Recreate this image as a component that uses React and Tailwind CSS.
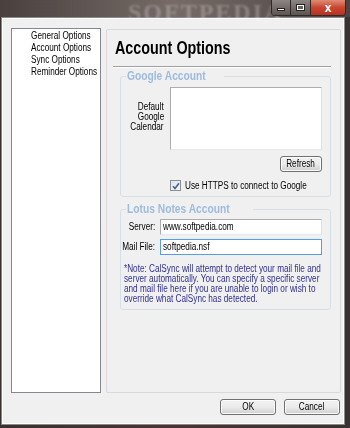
import React from 'react';

const font = { fontFamily: '"Liberation Sans", Arial, sans-serif' };

// the shot is squeezed sideways, so text is narrowed to match its widths
const Narrow = ({ children, right, center, className = '' }) => (
  <span
    className={`inline-block whitespace-nowrap scale-x-[0.82] ${
      right ? 'origin-right' : center ? 'origin-center' : 'origin-left'
    } ${className}`}
  >
    {children}
  </span>
);

const WinButton = ({ children, className = 'w-[56px]' }) => (
  <button
    className={`flex h-[16px] items-center justify-center rounded-[3px] border border-[#707070] bg-gradient-to-b from-[#f2f2f2] via-[#ebebeb] to-[#cfcfcf] text-[10px] leading-[14px] text-black shadow-[inset_0_0_0_1px_#fcfcfc] ${className}`}
  >
    <Narrow center>{children}</Narrow>
  </button>
);

const TextBox = ({ value, focused, className = '' }) => (
  <div
    className={`h-[16px] w-[162px] border bg-white pl-[2px] text-[10px] leading-[14px] text-black ${
      focused ? 'border-[#569de5]' : 'border-[#abadb3] border-b-[#e3e9ef] border-r-[#dbdfe6]'
    } ${className}`}
  >
    <Narrow>{value}</Narrow>
  </div>
);

const Group = ({ title, children, className = '' }) => (
  <fieldset className={`ml-[13px] w-[211px] min-w-0 rounded-[3px] border border-[#d5dfe5] ${className}`}>
    <legend className="ml-[5px] px-[1px] text-[12.5px] font-bold leading-[13px] text-[#9ebbde]">
      <Narrow>{title}</Narrow>
    </legend>
    {children}
  </fieldset>
);

export default function App() {
  const options = ['General Options', 'Account Options', 'Sync Options', 'Reminder Options'];

  return (
    <div
      style={font}
      className="flex h-[428px] w-[350px] flex-col overflow-hidden bg-gradient-to-r from-[#3a3230] via-[#4a3532] to-[#3a3230]"
    >
      {/* glass title bar */}
      <div className="relative flex h-[17px] shrink-0 items-start justify-end bg-gradient-to-r from-[#4a413e] via-[#766b67] to-[#4d4441] pr-[4px]">
        <div
          className="absolute left-[128px] top-[-6px] select-none text-[24px] font-bold tracking-[2px] text-white/25 blur-[1px]"
          style={{ fontFamily: '"Liberation Serif", serif' }}
        >
          SOFTPEDIA
        </div>
        <div className="relative flex h-[16px] overflow-hidden rounded-b-[4px] border border-t-0 border-[#2f2a29]">
          <div className="flex w-[19px] items-center justify-center border-r border-[#2f2a29] bg-gradient-to-b from-[#8d8581] to-[#5d5552]">
            <div className="mt-[4px] h-[3px] w-[8px] border border-[#222] bg-white" />
          </div>
          <div className="flex w-[20px] items-center justify-center border-r border-[#2f2a29] bg-gradient-to-b from-[#8d8581] to-[#5d5552]">
            <div className="h-[7px] w-[9px] border border-[#222] bg-white p-[1px]">
              <div className="h-full w-full bg-[#6a625f]" />
            </div>
          </div>
          <div className="flex w-[34px] items-center justify-center bg-gradient-to-b from-[#e08a74] via-[#c8462f] to-[#b8321f] text-[12px] font-bold leading-none text-white">
            x
          </div>
        </div>
      </div>

      {/* window body */}
      <div className="ml-[1px] h-[408px] w-[344px] border border-[#8a8a8a] bg-[#f0f0f0] shadow-[inset_0_0_0_1px_#ffffff]">
        <div className="flex pl-[9px] pr-[3px] pt-[10px]">
          <div className="h-[365px] w-[90px] overflow-hidden border border-[#828790] bg-white pl-[19px] pt-[1px]">
            {options.map(o => (
              <div key={o} className="text-[10px] leading-[12px] text-black">
                <Narrow>{o}</Narrow>
              </div>
            ))}
          </div>

          <div className="ml-[5px] mt-[1px] h-[364px] w-[235px] overflow-hidden rounded-[2px] border border-[#d9d9d9]">
            <h1 className="pl-[8px] pt-[8px] text-[17.5px] font-bold leading-[20px] text-black">
              <Narrow>Account Options</Narrow>
            </h1>
            <div className="ml-[6px] mt-[8px] h-[2px] w-[218px] border-b border-t border-b-white border-t-[#a0a0a0]" />

            <Group title="Google Account" className="mt-[2px] pb-[5px]">
              <div className="mt-[4px] flex">
                <div className="w-[43px] pt-[15px] text-right text-[10px] leading-[10px] text-black">
                  <Narrow right>Default</Narrow>
                  <br />
                  <Narrow right>Google</Narrow>
                  <br />
                  <Narrow right>Calendar</Narrow>
                </div>
                <div className="ml-[6px] h-[63px] w-[152px] border border-[#abadb3] border-b-[#e3e9ef] border-r-[#dbdfe6] bg-white" />
              </div>
              <div className="mt-[6px] flex justify-end pr-[8px]">
                <WinButton className="w-[42px]">Refresh</WinButton>
              </div>
              <div className="ml-[49px] mt-[8px] flex items-center">
                <div className="flex h-[11px] w-[11px] shrink-0 items-center justify-center border border-[#8e8f8f] bg-gradient-to-br from-[#dfe3ea] to-[#f4f6f8]">
                  <svg width="8" height="8" viewBox="0 0 8 8">
                    <path d="M1 4.2 L3 6.4 L7 1.2" fill="none" stroke="#4a5f97" strokeWidth="1.6" />
                  </svg>
                </div>
                <span className="ml-[4px] text-[10px] leading-[11px] text-black">
                  <Narrow>Use HTTPS to connect to Google</Narrow>
                </span>
              </div>
            </Group>

            <Group title="Lotus Notes Account" className="mt-[6px] pb-[5px]">
              <div className="mt-[3px] flex items-center">
                <span className="w-[34px] text-right text-[10px] leading-[12px] text-black">
                  <Narrow right>Server:</Narrow>
                </span>
                <TextBox value="www.softpedia.com" className="ml-[5px]" />
              </div>
              <div className="mt-[4px] flex items-center">
                <span className="flex w-[34px] justify-end text-[10px] leading-[12px] text-black">
                  <Narrow right>Mail File:</Narrow>
                </span>
                <TextBox value="softpedia.nsf" focused className="ml-[5px]" />
              </div>
              <div className="mt-[9px] w-[200px] pl-[3px] text-[10px] leading-[10px] text-[#303090]">
                <Narrow>
                  *Note: CalSync will attempt to detect your mail file and
                  <br />
                  server automatically. You can specify a specific server
                  <br />
                  and mail file here if you are unable to login or wish to
                  <br />
                  override what CalSync has detected.
                </Narrow>
              </div>
            </Group>
          </div>
        </div>

        <div className="mt-[6px] flex justify-end gap-[8px] pr-[4px]">
          <WinButton>OK</WinButton>
          <WinButton>Cancel</WinButton>
        </div>
      </div>
    </div>
  );
}
